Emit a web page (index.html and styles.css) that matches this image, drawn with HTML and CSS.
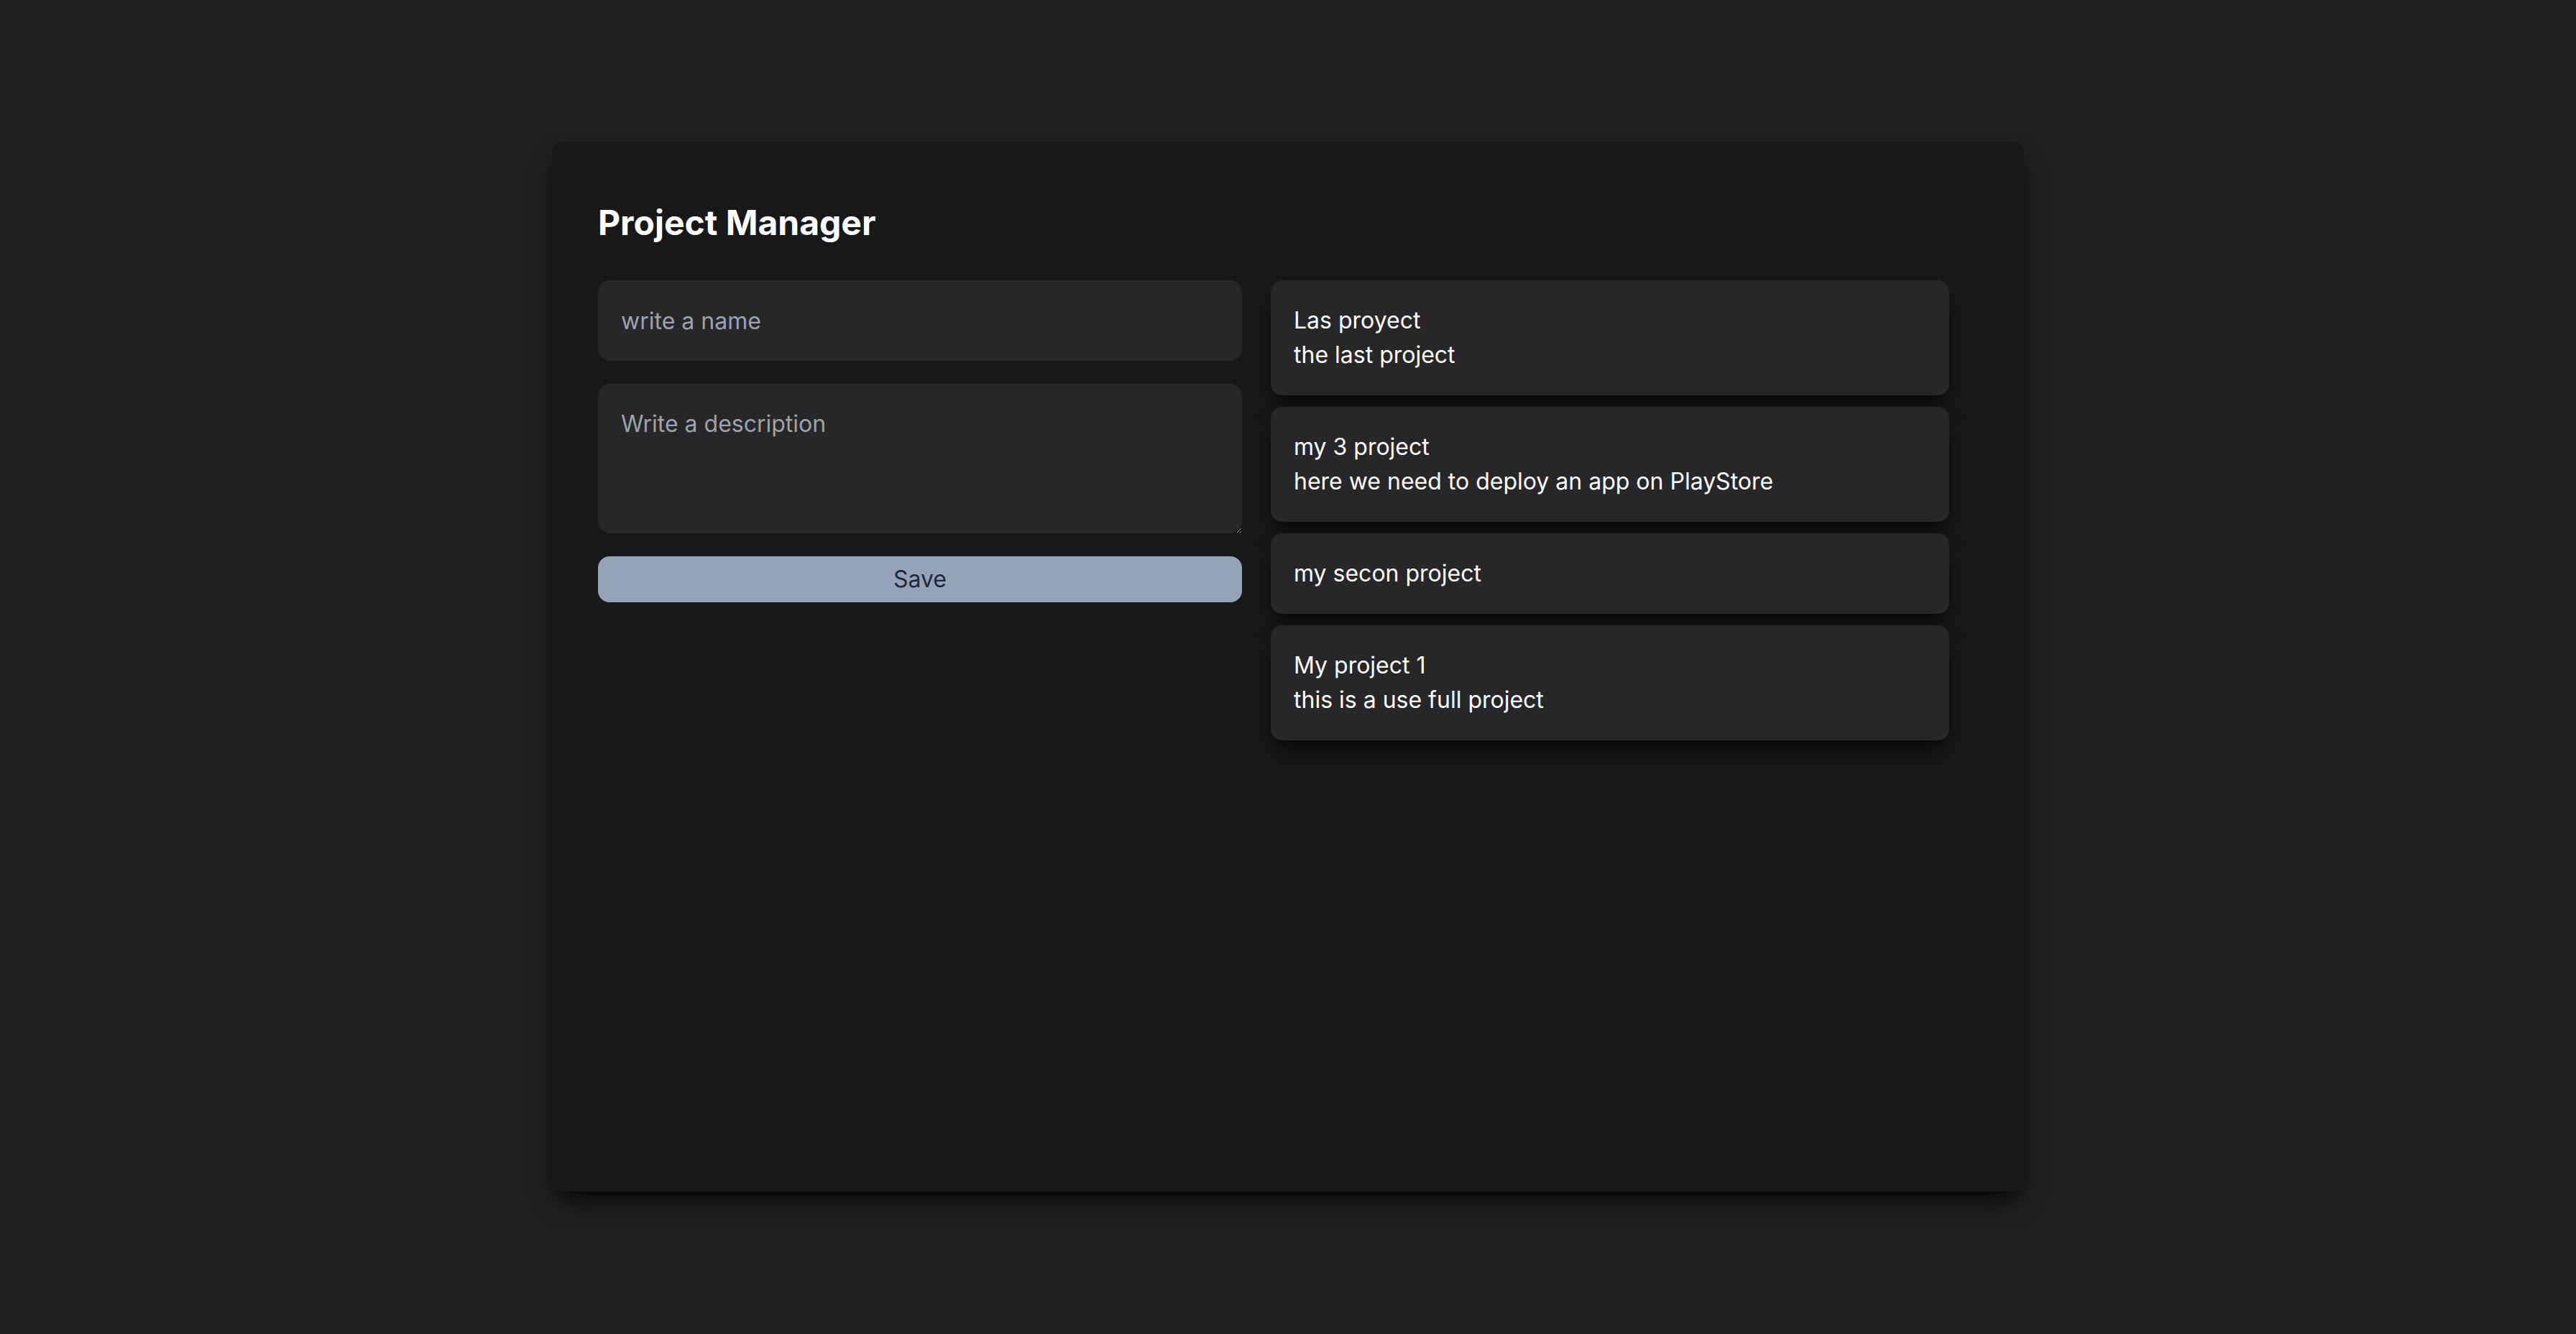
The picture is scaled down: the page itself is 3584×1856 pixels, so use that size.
FILE: index.html
```html
<!DOCTYPE html>
<html lang="en">
<head>
<meta charset="utf-8">
<title>Project Manager</title>
<link rel="stylesheet" href="styles.css">
</head>
<body>
<main class="panel">
  <h1 class="title">Project Manager</h1>
  <div class="layout">
    <form class="form">
      <input class="field" type="text" placeholder="write a name">
      <textarea class="field area" rows="3" placeholder="Write a description"></textarea>
      <button class="save" type="button">Save</button>
    </form>
    <div class="list">
      <div class="card"><div>Las proyect</div><div>the last project</div></div>
      <div class="card"><div>my 3 project</div><div>here we need to deploy an app on PlayStore</div></div>
      <div class="card"><div>my secon project</div></div>
      <div class="card"><div>My project 1</div><div>this is a use full project</div></div>
    </div>
  </div>
</main>
</body>
</html>
```
FILE: styles.css
```css
* { box-sizing: border-box; }
html, body { margin: 0; height: 100%; }
body {
  background: #212121;
  font-family: Inter, "Noto Sans", sans-serif;
  display: flex;
  align-items: center;
  justify-content: center;
  min-height: 100vh;
}
.panel {
  width: 2048px;
  height: 1460px;
  background: #18181b;
  border-radius: 16px;
  padding: 80px 64px 64px;
  box-shadow: 0 20px 40px -8px rgba(0,0,0,0.75), 0 8px 14px -8px rgba(0,0,0,0.6);
}
.title {
  margin: 0 0 48px;
  font-size: 48px;
  line-height: 64px;
  font-weight: 700;
  color: #ffffff;
}
.layout {
  display: flex;
  gap: 40px;
  align-items: flex-start;
}
.form {
  width: 896px;
  display: flex;
  flex-direction: column;
  gap: 32px;
  margin: 0;
}
.field {
  display: block;
  width: 100%;
  background: #27272a;
  border: none;
  border-radius: 16px;
  color: #ffffff;
  font-family: inherit;
  font-size: 32px;
  line-height: 48px;
  outline: none;
  margin: 0;
}
input.field { height: 112px; padding: 0 32px; }
.area { height: 208px; padding: 32px; }
.field::placeholder { color: #9ca3af; opacity: 1; }
.save {
  height: 64px;
  border: none;
  border-radius: 16px;
  background: #94a3b8;
  color: #1e293b;
  font-family: inherit;
  font-size: 32px;
  line-height: 48px;
  padding: 0;
}
.list {
  width: 944px;
  display: flex;
  flex-direction: column;
  gap: 16px;
}
.card {
  background: #27272a;
  border-radius: 16px;
  padding: 32px;
  color: #ffffff;
  font-size: 32px;
  line-height: 48px;
  box-shadow: 0 20px 30px -6px rgba(0,0,0,0.55), 0 8px 12px -8px rgba(0,0,0,0.55);
}
```
